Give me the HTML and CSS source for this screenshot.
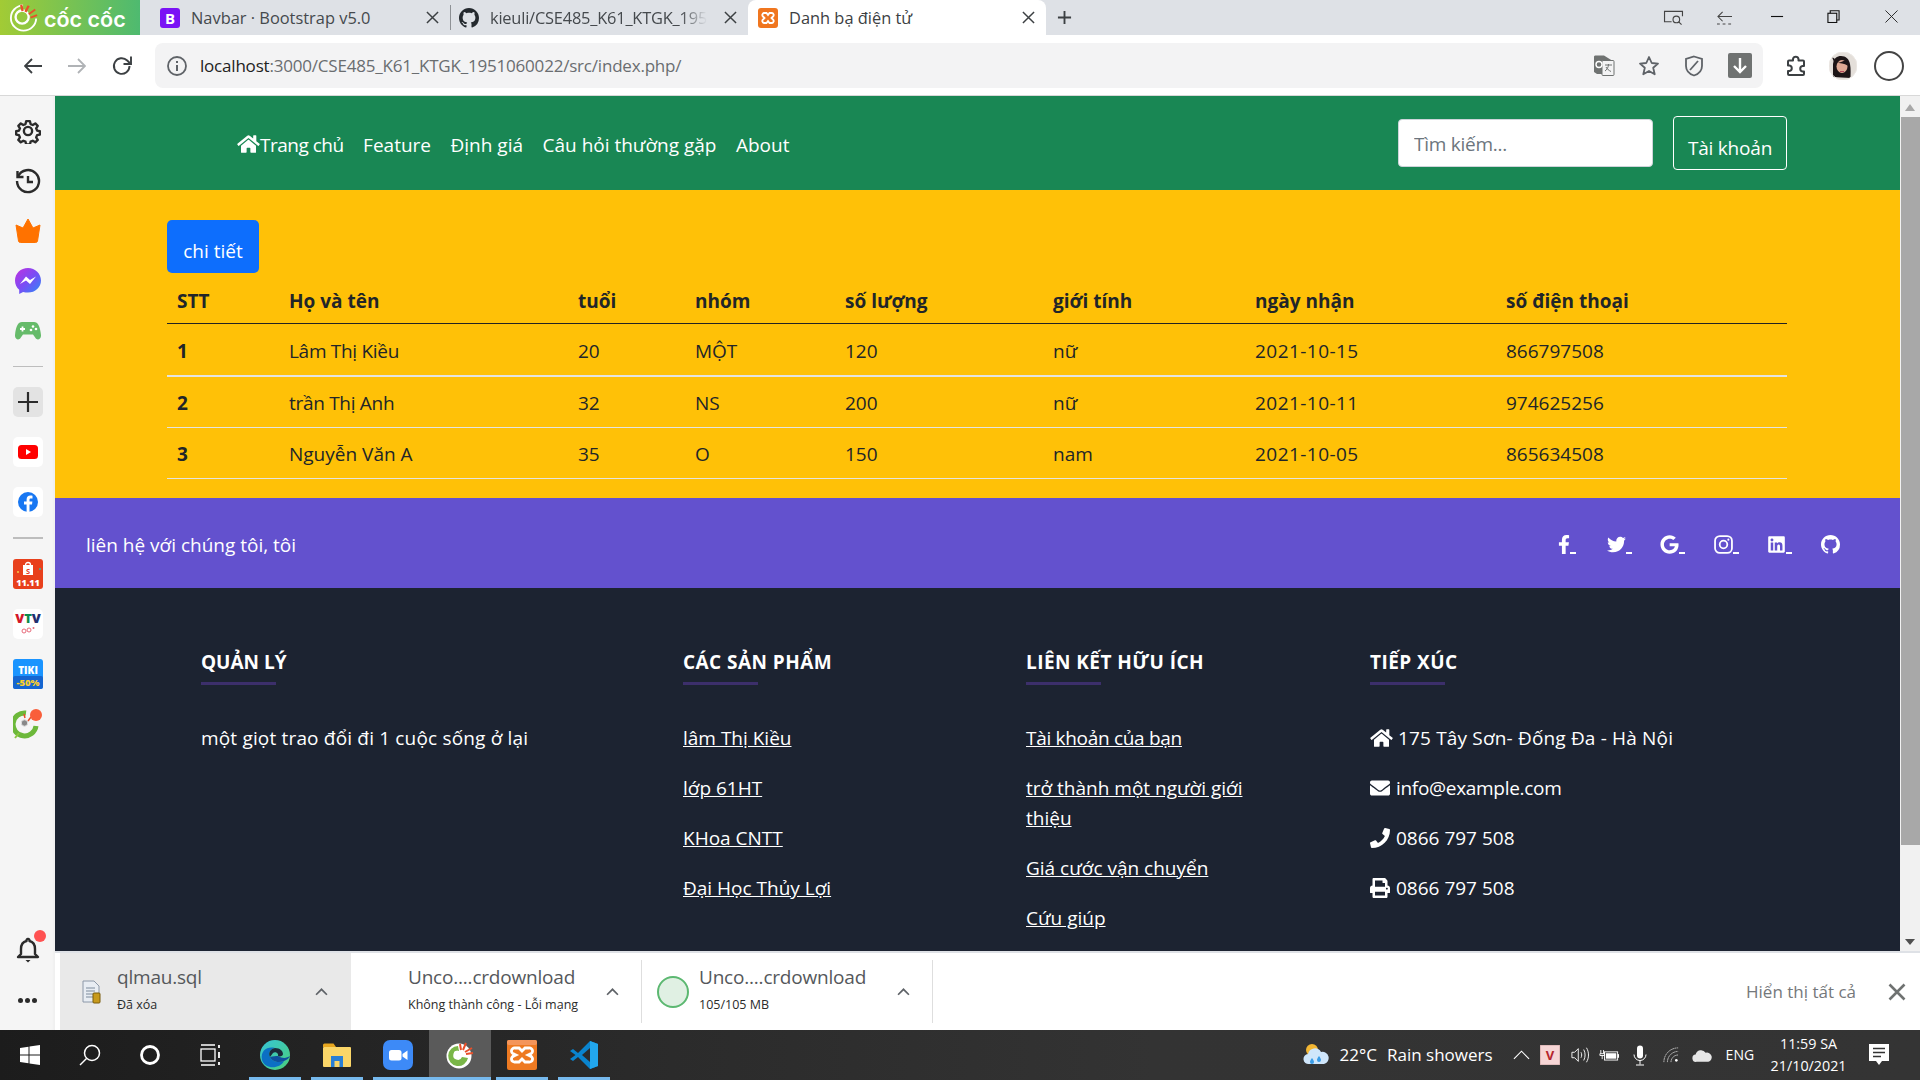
FILE: index.html
```html
<!DOCTYPE html>
<html lang="vi">
<head>
<meta charset="utf-8">
<title>Danh bạ điện tử</title>
<link rel="stylesheet" href="styles.css">
</head>
<body>
<div class="tabstrip">
  <div class="brand">
    <svg class="brand-ic" viewBox="0 0 32 32"><path d="M15 2.500a13.500 13.500 0 1 0 14 14" fill="none" stroke="#fff" stroke-width="2"/><circle cx="14" cy="15" r="7" fill="none" stroke="#fff" stroke-width="2.500"/><path d="M13 2l1.500 6.500M21 3l-3.500 6.500" stroke="#e8502a" stroke-width="2.500"/><path d="M28 7l-7 5M30 13l-7 2.500" stroke="#e8502a" stroke-width="2"/></svg>
    <span class="brand-name">cốc cốc</span>
  </div>
  <div class="tab tab-a">
    <svg class="fav" viewBox="0 0 20 20"><rect width="20" height="20" rx="3" fill="#7a12f5"/><text x="10" y="15.500" text-anchor="middle" font-size="15" font-weight="700" fill="#fff" font-family="Open Sans">B</text></svg>
    <span class="tab-t">Navbar · Bootstrap v5.0</span>
    <svg class="tab-x" viewBox="0 0 14 14"><path d="M1 1l12 12M13 1L1 13" stroke="#3c4043" stroke-width="1.600"/></svg>
  </div>
  <div class="tab tab-b">
    <svg class="fav" viewBox="0 0 16 16"><path fill="#24292e" d="M8 0C3.580 0 0 3.580 0 8c0 3.540 2.290 6.530 5.470 7.590.4.070.55-.17.55-.38 0-.19-.01-.82-.01-1.490-2.010.37-2.530-.49-2.690-.94-.09-.23-.48-.94-.82-1.130-.28-.15-.68-.52-.01-.53.63-.01 1.080.58 1.230.82.72 1.210 1.870.87 2.330.66.07-.52.28-.87.51-1.070-1.780-.2-3.640-.89-3.640-3.950 0-.87.31-1.590.82-2.150-.08-.2-.36-1.020.08-2.120 0 0 .67-.21 2.200.82.64-.18 1.320-.27 2-.27.68 0 1.360.09 2 .27 1.530-1.040 2.200-.82 2.200-.82.44 1.100.16 1.920.08 2.120.51.56.82 1.270.82 2.150 0 3.070-1.870 3.750-3.650 3.950.29.25.54.73.54 1.480 0 1.070-.01 1.930-.01 2.200 0 .21.15.46.55.38A8.013 8.013 0 0 0 16 8c0-4.420-3.580-8-8-8z"/></svg>
    <span class="tab-t tab-fade">kieuli/CSE485_K61_KTGK_195</span>
    <svg class="tab-x" viewBox="0 0 14 14"><path d="M1 1l12 12M13 1L1 13" stroke="#3c4043" stroke-width="1.600"/></svg>
  </div>
  <div class="tab tab-c">
    <svg class="fav" viewBox="0 0 20 20"><rect width="20" height="20" rx="3" fill="#f0761f"/><path d="M6 5h2.500L10 7l1.500-2H14a2 2 0 0 1 1 3.500L13.500 10l1.500 1.500A2 2 0 0 1 14 15h-2.500L10 13l-1.500 2H6a2 2 0 0 1-1-3.500L6.500 10 5 8.500A2 2 0 0 1 6 5z" fill="none" stroke="#fff" stroke-width="1.800"/></svg>
    <span class="tab-t tab-dark">Danh bạ điện tử</span>
    <svg class="tab-x" viewBox="0 0 14 14"><path d="M1 1l12 12M13 1L1 13" stroke="#3c4043" stroke-width="1.600"/></svg>
  </div>
  <svg class="newtab" viewBox="0 0 16 16"><path d="M8 1v14M1 8h14" stroke="#3c4043" stroke-width="2"/></svg>
  <div class="winctl">
    <svg class="wc wc-a" viewBox="0 0 22 18"><path d="M9 12.500H1.500V1.500h19v3M20.500 1.500v5" fill="none" stroke="#444" stroke-width="1.200"/><circle cx="14" cy="10" r="3.500" fill="none" stroke="#444" stroke-width="1.200"/><path d="M16.500 12.500l3 3" stroke="#444" stroke-width="1.200"/></svg>
    <svg class="wc wc-b" viewBox="0 0 18 16"><path d="M7 2L2 7l5 5M2 7h15" fill="none" stroke="#444" stroke-width="1.100"/><path d="M1 15h3M7 15h3M13 15h3" stroke="#444" stroke-width="1.100"/></svg>
    <svg class="wc wc-c" viewBox="0 0 14 14"><path d="M0 7h13" stroke="#111" stroke-width="1.200"/></svg>
    <svg class="wc wc-d" viewBox="0 0 14 14"><rect x="1" y="3.500" width="9.500" height="10" fill="none" stroke="#111" stroke-width="1.200"/><path d="M3.500 3.500V.8H13v10h-2.500" fill="none" stroke="#111" stroke-width="1.200"/></svg>
    <svg class="wc wc-e" viewBox="0 0 14 14"><path d="M.5.5l13 13M13.500.5l-13 13" stroke="#222" stroke-width="1"/></svg>
  </div>
</div>

<div class="toolbar">
  <svg class="tb-ic tb-back" viewBox="0 0 18 16"><path d="M8 1L1 8l7 7M1 8h17" fill="none" stroke="#3c4043" stroke-width="1.800"/></svg>
  <svg class="tb-ic tb-fwd" viewBox="0 0 18 16"><path d="M10 1l7 7-7 7M17 8H0" fill="none" stroke="#b0b3b6" stroke-width="1.800"/></svg>
  <svg class="tb-ic tb-rel" viewBox="0 0 22 22"><path d="M18.500 11a7.800 7.800 0 1 1-2.300-5.500L19 8.200" fill="none" stroke="#3c4043" stroke-width="1.900"/><path d="M20 1.500v7.500h-7.500" fill="none" stroke="#3c4043" stroke-width="1.900"/></svg>
  <div class="urlbar">
    <svg class="u-info" viewBox="0 0 20 20"><circle cx="10" cy="10" r="9" fill="none" stroke="#5f6368" stroke-width="1.800"/><path d="M10 9v6M10 5v2" stroke="#5f6368" stroke-width="2"/></svg>
    <span class="u-text"><span class="u-host">localhost</span>:3000/CSE485_K61_KTGK_1951060022/src/index.php/</span>
    <div class="u-right">
      <svg class="u-ic" viewBox="0 0 22 22"><path d="M1 1.500a1.500 1.500 0 0 1 1.500-1H11l8 5v12a1.500 1.500 0 0 1-1 1.500H4L1 17z" fill="#6f7271"/><rect x="9" y="5.500" width="12" height="15" rx="1" fill="#f3f3f4" stroke="#6f7271"/><circle cx="6" cy="9.500" r="3" fill="none" stroke="#fff" stroke-width="1.400"/><path d="M12 10h7M15.500 9c0 4-2 6-3.500 7M13 12c1 2 3 3.500 5 4.500" fill="none" stroke="#6f7271" stroke-width="1"/></svg>
      <svg class="u-ic" viewBox="0 0 22 22"><path d="M11 2l2.700 6 6.300.6-4.800 4.200 1.500 6.500L11 16l-5.700 3.300 1.500-6.500L2 8.600 8.300 8z" fill="none" stroke="#5f6368" stroke-width="1.800" stroke-linejoin="round"/></svg>
      <svg class="u-ic" viewBox="0 0 22 22"><path d="M11 1.500l8 2.500v7c0 4.500-3.500 8-8 9.500-4.500-1.500-8-5-8-9.500V4z" fill="none" stroke="#5f6368" stroke-width="1.800"/><path d="M15 6L7 15" stroke="#5f6368" stroke-width="1.800"/></svg>
      <svg class="u-dl" viewBox="0 0 24 25"><rect width="24" height="25" rx="2" fill="#6f7271"/><path d="M12 5v14M6 13l6 6 6-6" fill="none" stroke="#fff" stroke-width="2.400"/></svg>
    </div>
  </div>
  <div class="tb-right">
    <svg class="ext" viewBox="0 0 22 22"><path d="M8 4a2.800 2.800 0 0 1 5.500 0v1.500h4.500a1 1 0 0 1 1 1V11h-1.500a2.800 2.800 0 0 0 0 5.500H19V19a1 1 0 0 1-1 1H4a1 1 0 0 1-1-1v-3h1.500a2.800 2.800 0 0 0 0-5.500H3V6.500a1 1 0 0 1 1-1h4z" fill="none" stroke="#3c4043" stroke-width="2" stroke-linejoin="round"/></svg>
    <svg class="avatar" viewBox="0 0 28 28"><circle cx="14" cy="14" r="14" fill="#e4dfda"/><path d="M4 25V12C5 6 8 4 12 4c5 0 8 3 9 8 1 5 .5 10 .5 14z" fill="#1c1416"/><path d="M3 5l3 2-1 3z" fill="#1c1416"/><ellipse cx="13" cy="14.500" rx="5.500" ry="6.500" fill="#dfa994"/><path d="M7 11c3 0 7-2 10-3 2 2 2 4 1.500 5.500C15.500 11.500 11 11 7 11z" fill="#1c1416"/><path d="M11 19.500h4" stroke="#b3485a"/><circle cx="14" cy="14" r="14" fill="none" stroke="#ece8e4"/></svg>
    <span class="profile"></span>
  </div>
</div>

<div class="shell">
  <aside class="side">
    <svg class="s-ic" viewBox="0 0 24 24"><circle cx="12" cy="12" r="3.800" fill="none" stroke="#2b2b2b" stroke-width="2.200"/><path d="M10 1.500h4l.7 3.100 2.300 1 2.700-1.700 2.600 2.600-1.700 2.700 1 2.300 3 .7v3.500l-3 .7-1 2.300 1.700 2.700-2.600 2.600-2.700-1.700-2.300 1-.7 3h-4l-.7-3-2.300-1-2.700 1.700-2.600-2.600 1.700-2.700-1-2.300-3-.7v-3.500l3-.7 1-2.300-1.700-2.700 2.600-2.600 2.700 1.700 2.300-1z" transform="translate(1.600 1.600) scale(.87)" fill="none" stroke="#2b2b2b" stroke-width="2.500" stroke-linejoin="round"/></svg>
    <svg class="s-ic" viewBox="0 0 26 26"><path d="M3 8.500A11 11 0 1 1 2 13" fill="none" stroke="#2b2b2b" stroke-width="2.400"/><path d="M2.500 3v6h6" fill="none" stroke="#2b2b2b" stroke-width="2.400"/><path d="M13 8v6h5" fill="none" stroke="#2b2b2b" stroke-width="2.400"/></svg>
    <svg class="s-ic" viewBox="0 0 26 26"><path d="M13 1l5 9 7-3-2.500 16a2 2 0 0 1-2 1.500h-15a2 2 0 0 1-2-1.500L1 7l7 3z" fill="#ff7200" stroke="#ff7200" stroke-linejoin="round"/></svg>
    <svg class="s-ic" viewBox="0 0 26 26"><defs><linearGradient id="mg" x1="0" y1="0" x2="1" y2="1"><stop offset="0" stop-color="#c030e0"/><stop offset=".5" stop-color="#7a4df5"/><stop offset="1" stop-color="#2a8cf7"/></linearGradient></defs><path d="M13 0C5.700 0 0 5.300 0 12.500c0 3.800 1.600 7 4.200 9.300V26l3.900-2.100c1.500.4 3.200.7 4.900.7 7.300 0 13-5.300 13-12.100S20.300 0 13 0z" fill="url(#mg)"/><path d="M5 16l6-7.500 4 3.500 6-3.500-6 7.500-4-3.500z" fill="#fff"/></svg>
    <svg class="s-ic" viewBox="0 0 26 20"><path d="M7 1h12c4 0 6 4 7 13 .3 4-3.500 6-5.500 3L18 13.500H8L5.500 17C3.500 20-.3 18 0 14 1 5 3 1 7 1z" fill="#66bb6a"/><path d="M5 8h5M7.500 5.500v5" stroke="#fff" stroke-width="1.800"/><circle cx="18" cy="5.500" r="1.300" fill="#fff"/><circle cx="21" cy="8" r="1.300" fill="#fff"/><circle cx="16" cy="9" r="1.300" fill="#fff"/></svg>
    <div class="s-div"></div>
    <div class="s-tile s-plus"><svg viewBox="0 0 20 20"><path d="M10 0v20M0 10h20" stroke="#2b2b2b" stroke-width="2.200"/></svg></div>
    <div class="s-tile"><svg viewBox="0 0 20 14"><rect width="20" height="14" rx="3.500" fill="#f00"/><path d="M8 4l5 3-5 3z" fill="#fff"/></svg></div>
    <div class="s-tile"><svg viewBox="0 0 20 20"><circle cx="10" cy="10" r="10" fill="#1877f2"/><path d="M11.500 20v-7.500H14l.4-3h-2.900V7.800c0-.9.300-1.400 1.500-1.400h1.500V3.700c-.4 0-1.200-.1-2.200-.1-2.200 0-3.700 1.300-3.700 3.800v2.100H6v3h2.600V20z" fill="#fff"/></svg></div>
    <div class="s-div s-div2"></div>
    <div class="s-tile s-shop"><svg viewBox="0 0 30 30"><rect width="30" height="30" rx="3" fill="#e8401c"/><circle cx="5" cy="13" r="1" fill="#f7c948"/><circle cx="27" cy="10" r="1" fill="#32b8a0"/><path d="M10 6h10v10H10z" fill="#fff"/><path d="M12.500 6a2.500 2.500 0 0 1 5 0" fill="none" stroke="#fff" stroke-width="1.300"/><text x="15" y="14.500" text-anchor="middle" font-size="7.500" font-weight="700" fill="#e8401c" font-family="Open Sans">S</text><text x="15" y="26.500" text-anchor="middle" font-size="9" font-weight="800" fill="#fff" font-family="Open Sans">11.11</text></svg></div>
    <div class="s-tile s-vtv"><svg viewBox="0 0 30 30"><text x="15" y="14" text-anchor="middle" font-size="13" font-weight="800" font-family="Open Sans"><tspan fill="#d3172a">V</tspan><tspan fill="#0d8a4e">T</tspan><tspan fill="#23306f">V</tspan></text><circle cx="11" cy="22" r="2" fill="none" stroke="#e76a7a"/><circle cx="16" cy="21" r="2" fill="none" stroke="#e76a7a"/><circle cx="20.500" cy="19" r="1" fill="#e76a7a"/></svg></div>
    <div class="s-tile s-tiki"><svg viewBox="0 0 30 30"><rect width="30" height="30" rx="3" fill="#1a94ff"/><rect y="17" width="30" height="13" rx="2" fill="#1565d0"/><text x="15" y="14.500" text-anchor="middle" font-size="10" font-weight="800" fill="#fff" font-family="Open Sans">TIKI</text><text x="15" y="27" text-anchor="middle" font-size="9.500" font-weight="800" fill="#fad02c" font-family="Open Sans">-50%</text></svg></div>
    <svg class="s-ic s-coc" viewBox="0 0 30 30"><path d="M13 4a11.500 11.500 0 1 0 10 13" fill="none" stroke="#6cb83a" stroke-width="5"/><circle cx="11.500" cy="14" r="3.200" fill="#888" stroke="#ddd"/><path d="M2 29l4-5" stroke="#8cc63f" stroke-width="2"/><path d="M11 5l1 4M18 8l-3 4" stroke="#e8502a" stroke-width="1.500"/><circle cx="23" cy="6" r="6" fill="#f95e3a"/></svg>
    <div class="s-bottom">
      <div class="bell-wrap">
        <svg class="s-ic" viewBox="0 0 24 26"><path d="M12 2a1.500 1.500 0 0 1 1.500 2C17.500 5 19 8 19 12v5l3 3H2l3-3v-5c0-4 1.500-7 5.500-8A1.500 1.500 0 0 1 12 2z" fill="none" stroke="#2b2b2b" stroke-width="2.400" stroke-linejoin="round"/><path d="M9.500 23h5l-2.500 2.500z" fill="#2b2b2b"/></svg>
        <span class="bell-dot"></span>
      </div>
      <div class="s-dots"><span></span><span></span><span></span></div>
    </div>
  </aside>

  <div class="stage">
    <div class="viewport">
      <main class="page">
        <header class="nav">
          <ul class="nav-links">
            <li class="nav-home"><svg class="home" viewBox="0 0 576 512"><path fill="#fff" d="M280.370 148.260L96 300.110V464a16 16 0 0 0 16 16l112.060-.29a16 16 0 0 0 15.920-16V368a16 16 0 0 1 16-16h64a16 16 0 0 1 16 16v95.640a16 16 0 0 0 16 16.050L464 480a16 16 0 0 0 16-16V300L295.670 148.260a12.190 12.190 0 0 0-15.300 0zM571.600 251.470L488 182.560V44.050a12 12 0 0 0-12-12h-56a12 12 0 0 0-12 12v72.610L318.470 43a48 48 0 0 0-61 0L4.340 251.470a12 12 0 0 0-1.600 16.900l25.500 31A12 12 0 0 0 45.150 301l235.220-193.740a12.190 12.190 0 0 1 15.300 0L530.900 301a12 12 0 0 0 16.900-1.600l25.500-31a12 12 0 0 0-1.700-16.930z"/></svg>Trang chủ</li>
            <li>Feature</li>
            <li>Định giá</li>
            <li>Câu hỏi thường gặp</li>
            <li>About</li>
          </ul>
          <div class="search">
            <input class="search-in" type="text" placeholder="Tìm kiếm...">
            <button class="acct" type="button">Tài khoản</button>
          </div>
        </header>

        <section class="band">
          <button class="detail" type="button">chi tiết</button>
          <table class="grid">
            <colgroup><col class="c1"><col class="c2"><col class="c3"><col class="c4"><col class="c5"><col class="c6"><col class="c7"><col class="c8"></colgroup>
            <thead>
              <tr><th>STT</th><th>Họ và tên</th><th>tuổi</th><th>nhóm</th><th>số lượng</th><th>giới tính</th><th>ngày nhận</th><th>số điện thoại</th></tr>
            </thead>
            <tbody>
              <tr class="r-thick"><th>1</th><td class="tight">Lâm Thị Kiều</td><td>20</td><td>MỘT</td><td>120</td><td>nữ</td><td class="date">2021-10-15</td><td>866797508</td></tr>
              <tr><th>2</th><td class="tight">trần Thị Anh</td><td>32</td><td>NS</td><td>200</td><td>nữ</td><td class="date">2021-10-11</td><td>974625256</td></tr>
              <tr><th>3</th><td>Nguyễn Văn A</td><td>35</td><td>O</td><td>150</td><td>nam</td><td class="date">2021-10-05</td><td>865634508</td></tr>
            </tbody>
          </table>
        </section>

        <section class="social">
          <span class="soc-text">liên hệ với chúng tôi, tôi</span>
          <div class="soc-icons">
            <a class="soc soc-first dash"><svg class="f" viewBox="0 0 320 512"><path fill="#fff" d="M279.140 288l14.220-92.660h-88.910v-60.130c0-25.350 12.420-50.060 52.240-50.060h40.420V6.260S260.430 0 225.360 0c-73.220 0-121.080 44.380-121.080 124.720v70.620H22.890V288h81.390v224h100.170V288z"/></svg></a>
            <a class="soc dash"><svg viewBox="0 0 512 512"><path fill="#fff" d="M459.370 151.716c.325 4.548.325 9.097.325 13.645 0 138.720-105.583 298.558-298.558 298.558-59.452 0-114.680-17.219-161.137-47.106 8.447.974 16.568 1.299 25.340 1.299 49.055 0 94.213-16.568 130.274-44.832-46.132-.975-84.792-31.188-98.112-72.772 6.498.974 12.995 1.624 19.818 1.624 9.421 0 18.843-1.300 27.614-3.573-48.081-9.747-84.143-51.980-84.143-102.985v-1.299c13.969 7.797 30.214 12.670 47.431 13.319-28.264-18.843-46.781-51.005-46.781-87.391 0-19.492 5.197-37.360 14.294-52.954 51.655 63.675 129.300 105.258 216.365 109.807-1.624-7.797-2.599-15.918-2.599-24.040 0-57.828 46.782-104.934 104.934-104.934 30.213 0 57.502 12.670 76.670 33.137 23.715-4.548 46.456-13.320 66.599-25.340-7.798 24.366-24.366 44.833-46.132 57.827 21.117-2.273 41.584-8.122 60.426-16.243-14.292 20.791-32.161 39.308-52.628 54.253z"/></svg></a>
            <a class="soc dash"><svg viewBox="0 0 488 512"><path fill="#fff" d="M488 261.800C488 403.300 391.100 504 248 504 110.800 504 0 393.200 0 256S110.800 8 248 8c66.800 0 123 24.500 166.300 64.900l-67.500 64.900C258.500 52.600 94.300 116.600 94.300 256c0 86.500 69.100 156.600 153.700 156.600 98.200 0 135-70.400 140.800-106.900H248v-85.300h236.100c2.300 12.700 3.900 24.900 3.900 41.400z"/></svg></a>
            <a class="soc dash"><svg viewBox="0 0 18 18"><rect x="1" y="1" width="16" height="16" rx="4.500" fill="none" stroke="#fff" stroke-width="1.700"/><circle cx="9" cy="9" r="3.600" fill="none" stroke="#fff" stroke-width="1.700"/><circle cx="13.600" cy="4.400" r="1" fill="#fff"/></svg></a>
            <a class="soc dash"><svg viewBox="0 0 448 512"><path fill="#fff" d="M416 32H31.900C14.300 32 0 46.500 0 64.300v383.400C0 465.500 14.300 480 31.900 480H416c17.600 0 32-14.500 32-32.300V64.300c0-17.800-14.400-32.300-32-32.300zM135.400 416H69V202.200h66.500V416zm-33.200-243c-21.300 0-38.500-17.300-38.500-38.500S80.900 96 102.200 96c21.200 0 38.500 17.300 38.500 38.500 0 21.300-17.200 38.500-38.500 38.500zm282.100 243h-66.400V312c0-24.800-.5-56.700-34.500-56.700-34.600 0-39.900 27-39.900 54.900V416h-66.400V202.200h63.700v29.200h.9c8.900-16.800 30.600-34.500 62.900-34.500 67.200 0 79.700 44.300 79.700 101.900V416z"/></svg></a>
            <a class="soc"><svg viewBox="0 0 16 16"><path fill="#fff" d="M8 0C3.580 0 0 3.580 0 8c0 3.540 2.290 6.530 5.470 7.590.4.070.55-.17.55-.38 0-.19-.01-.82-.01-1.490-2.010.37-2.530-.49-2.690-.94-.09-.23-.48-.94-.82-1.130-.28-.15-.68-.52-.01-.53.63-.01 1.080.58 1.230.82.72 1.210 1.870.87 2.330.66.07-.52.28-.87.51-1.070-1.780-.2-3.640-.89-3.640-3.950 0-.87.31-1.590.82-2.150-.08-.2-.36-1.020.08-2.120 0 0 .67-.21 2.200.82.64-.18 1.320-.27 2-.27.68 0 1.360.09 2 .27 1.530-1.040 2.200-.82 2.200-.82.44 1.100.16 1.920.08 2.120.51.56.82 1.270.82 2.150 0 3.070-1.870 3.750-3.650 3.950.29.25.54.73.54 1.480 0 1.070-.01 1.930-.01 2.200 0 .21.15.46.55.38A8.013 8.013 0 0 0 16 8c0-4.420-3.580-8-8-8z"/></svg></a>
          </div>
        </section>

        <footer class="foot">
          <div class="f-col">
            <h6 class="f-h">QUẢN LÝ</h6>
            <hr class="f-rule">
            <p class="f-line f-wide">một giọt trao đổi đi 1 cuộc sống ở lại</p>
          </div>
          <div class="f-col">
            <h6 class="f-h f-hs">CÁC SẢN PHẨM</h6>
            <hr class="f-rule">
            <p class="f-line"><a>lâm Thị Kiều</a></p>
            <p class="f-line"><a>lớp 61HT</a></p>
            <p class="f-line"><a>KHoa CNTT</a></p>
            <p class="f-line"><a>Đại Học Thủy Lợi</a></p>
          </div>
          <div class="f-col">
            <h6 class="f-h f-hs">LIÊN KẾT HỮU ÍCH</h6>
            <hr class="f-rule">
            <p class="f-line tight"><a>Tài khoản của bạn</a></p>
            <p class="f-line f-narrow"><a>trở thành một người giới thiệu</a></p>
            <p class="f-line"><a>Giá cước vận chuyển</a></p>
            <p class="f-line"><a>Cứu giúp</a></p>
          </div>
          <div class="f-col">
            <h6 class="f-h f-hs">TIẾP XÚC</h6>
            <hr class="f-rule">
            <p class="f-line f-wide"><svg class="f-ic f-home" viewBox="0 0 576 512"><path fill="#fff" d="M280.370 148.260L96 300.110V464a16 16 0 0 0 16 16l112.060-.29a16 16 0 0 0 15.920-16V368a16 16 0 0 1 16-16h64a16 16 0 0 1 16 16v95.640a16 16 0 0 0 16 16.050L464 480a16 16 0 0 0 16-16V300L295.670 148.260a12.190 12.190 0 0 0-15.300 0zM571.600 251.470L488 182.560V44.050a12 12 0 0 0-12-12h-56a12 12 0 0 0-12 12v72.610L318.470 43a48 48 0 0 0-61 0L4.340 251.470a12 12 0 0 0-1.600 16.900l25.500 31A12 12 0 0 0 45.150 301l235.220-193.740a12.190 12.190 0 0 1 15.300 0L530.900 301a12 12 0 0 0 16.900-1.600l25.500-31a12 12 0 0 0-1.700-16.930z"/></svg>175 Tây Sơn- Đống Đa - Hà Nội</p>
            <p class="f-line tight"><svg class="f-ic" viewBox="0 0 512 512"><path fill="#fff" d="M502.300 190.800c3.900-3.100 9.700-.2 9.700 4.700V400c0 26.500-21.500 48-48 48H48c-26.500 0-48-21.500-48-48V195.600c0-5 5.700-7.800 9.700-4.700 22.400 17.400 52.100 39.500 154.100 113.600 21.100 15.400 56.700 47.800 92.200 47.600 35.700.3 72-32.800 92.300-47.600 102-74.100 131.600-96.300 154-113.700zM256 320c23.200.4 56.600-29.200 73.400-41.400 132.700-96.300 142.800-104.700 173.400-128.700 5.800-4.500 9.200-11.500 9.200-18.900v-19c0-26.500-21.500-48-48-48H48C21.500 64 0 85.500 0 112v19c0 7.400 3.400 14.300 9.200 18.900 30.600 23.900 40.700 32.400 173.400 128.700 16.800 12.200 50.200 41.800 73.400 41.400z"/></svg>info@example.com</p>
            <p class="f-line"><svg class="f-ic" viewBox="0 0 512 512"><path fill="#fff" d="M493.400 24.600l-104-24c-11.300-2.600-22.900 3.300-27.500 13.900l-48 112c-4.200 9.800-1.400 21.300 6.900 28l60.600 49.600c-36 76.700-98.900 140.500-177.200 177.200l-49.600-60.600c-6.800-8.300-18.200-11.100-28-6.900l-112 48C3.900 366.500-2 378.100.6 389.400l24 104C27.100 504.200 36.700 512 48 512c256.100 0 464-207.500 464-464 0-11.200-7.700-20.900-18.600-23.400z"/></svg>0866 797 508</p>
            <p class="f-line"><svg class="f-ic" viewBox="0 0 512 512"><path fill="#fff" d="M448 192V77.250c0-8.490-3.370-16.620-9.370-22.630L393.370 9.370c-6-6-14.140-9.370-22.630-9.370H96C78.330 0 64 14.330 64 32v160c-35.350 0-64 28.650-64 64v112c0 8.840 7.160 16 16 16h48v96c0 17.670 14.330 32 32 32h320c17.670 0 32-14.330 32-32v-96h48c8.840 0 16-7.160 16-16V256c0-35.350-28.650-64-64-64zm-64 256H128v-96h256v96zm0-224H128V64h192v48c0 8.840 7.160 16 16 16h48v96zm48 72c-13.250 0-24-10.750-24-24 0-13.260 10.750-24 24-24s24 10.740 24 24c0 13.250-10.750 24-24 24z"/></svg>0866 797 508</p>
          </div>
        </footer>
      </main>
      <div class="vscroll">
        <span class="sb-up"></span>
        <span class="sb-thumb"></span>
        <span class="sb-down"></span>
      </div>
    </div>
    <div class="downloads">
      <div class="dl dl-on">
        <div class="dl-icon"><svg viewBox="0 0 20 24"><path d="M1 1h11l5 5v16H1z" fill="#e8edf3" stroke="#8c98a8"/><path d="M4 8h9M4 11h9M4 14h8M4 17h7" stroke="#7d8b9c"/><rect x="11" y="13" width="7" height="10" rx="1" fill="#c79a1c" stroke="#7a5d0c"/></svg></div>
        <div class="dl-body"><div class="dl-name">qlmau.sql</div><div class="dl-sub">Đã xóa</div></div>
        <svg class="dl-chev" viewBox="0 0 12 8"><path d="M1 7l5-5 5 5" fill="none" stroke="#5f6368" stroke-width="1.600"/></svg>
      </div>
      <div class="dl">
        <div class="dl-icon"></div>
        <div class="dl-body"><div class="dl-name">Unco....crdownload</div><div class="dl-sub">Không thành công - Lỗi mạng</div></div>
        <svg class="dl-chev" viewBox="0 0 12 8"><path d="M1 7l5-5 5 5" fill="none" stroke="#5f6368" stroke-width="1.600"/></svg>
      </div>
      <div class="dl">
        <div class="dl-icon"><span class="dl-ring"></span></div>
        <div class="dl-body"><div class="dl-name">Unco....crdownload</div><div class="dl-sub">105/105 MB</div></div>
        <svg class="dl-chev" viewBox="0 0 12 8"><path d="M1 7l5-5 5 5" fill="none" stroke="#5f6368" stroke-width="1.600"/></svg>
      </div>
      <div class="dl-end">
        <span class="dl-all">Hiển thị tất cả</span>
        <svg class="dl-x" viewBox="0 0 18 18"><path d="M1.500 1.500l15 15M16.500 1.500l-15 15" stroke="#6f7271" stroke-width="2.600"/></svg>
      </div>
    </div>
  </div>
</div>

<div class="taskbar">
  <div class="tk tk-sys"><svg class="t-win" viewBox="0 0 20 20"><path fill="#fff" d="M0 3l8.500-1.300V9.500H0zM9.500 1.500L20 0v9.500H9.500zM0 10.500h8.500v7.800L0 17zM9.500 10.500H20V20L9.500 18.500z"/></svg></div>
  <div class="tk tk-sys"><svg class="t-24" viewBox="0 0 22 22"><circle cx="13" cy="9" r="7.500" fill="none" stroke="#fff" stroke-width="1.500"/><path d="M7.500 14.500L1 21" stroke="#fff" stroke-width="1.500"/></svg></div>
  <div class="tk tk-sys"><svg class="t-24" viewBox="0 0 22 22"><circle cx="11" cy="11" r="8.500" fill="none" stroke="#fff" stroke-width="2.800"/></svg></div>
  <div class="tk tk-sys"><svg class="t-24" viewBox="0 0 22 22"><path d="M2 1h14M2 21h14" stroke="#fff" stroke-width="1.300"/><rect x="2" y="5" width="14" height="12" fill="none" stroke="#fff" stroke-width="1.300"/><path d="M20 1v3M20 8v6M20 18v3" stroke="#fff" stroke-width="1.800"/></svg></div>
  <div class="tk tk-app lit"><svg class="t-30" viewBox="0 0 30 30"><defs><linearGradient id="eg" x1="0" y1="0" x2="1" y2="1"><stop offset="0" stop-color="#36c3d8"/><stop offset="1" stop-color="#4bd07a"/></linearGradient></defs><circle cx="15" cy="15" r="15" fill="url(#eg)"/><path d="M2 20C0 10 8 6 15 8c-5 1-7 5-5 9 2 5 9 6 14 4-4 8-19 9-22-1z" fill="#0c6fc4"/><path d="M10 17c-2-4 0-8 5-9 5 0 8 3 8 6 0 2-3 3-5 2 1-3-3-5-5-3-1 1-2 3-3 4z" fill="#1c2a3a"/><path d="M10 17c2 5 9 6 14 4 3-1 5-3 6-5-3 2-7 3-12 0-2 0-5 0-8 1z" fill="#0f4f9e"/></svg></div>
  <div class="tk tk-app lit"><svg class="t-30" viewBox="0 0 30 26"><path d="M1 3a1.500 1.500 0 0 1 1.500-1.500h9L14 5H1z" fill="#e8a71f"/><rect x="1" y="5" width="28" height="20" rx="1" fill="#fbd668"/><path d="M9 14h12v11h-3.500v-6h-5v6H9z" fill="#2a7fd5"/></svg></div>
  <div class="tk tk-app lit lit-split"><svg class="t-30" viewBox="0 0 30 30"><rect width="30" height="30" rx="7" fill="#3d8af7"/><rect x="6" y="10" width="12.500" height="10.500" rx="2.500" fill="#fff"/><path d="M19.500 14l5-3.500v9.500l-5-3.500z" fill="#fff"/></svg></div>
  <div class="tk tk-app lit lit-on"><svg class="t-30" viewBox="0 0 30 30"><circle cx="14" cy="16" r="12.500" fill="#fff"/><path d="M13 6a10 10 0 1 0 10 12l-6-1a4.500 4.500 0 1 1-3-6z" fill="#7ab648"/><circle cx="12" cy="14" r="2.500" fill="none" stroke="#fff" stroke-width="1.500"/><path d="M15 4l1 6M21 3l-3 7" stroke="#e8502a" stroke-width="2"/><path d="M27 8l-7 4M28 13l-7 1" stroke="#e8502a" stroke-width="2"/></svg></div>
  <div class="tk tk-app lit"><svg class="t-30" viewBox="0 0 30 30"><rect width="30" height="30" rx="2" fill="#ee7a22"/><rect y="0" width="30" height="5" rx="2" fill="#f4955a"/><path d="M8 8h4l3 3 3-3h4a3 3 0 0 1 1 6l-2 1 2 1a3 3 0 0 1-1 6h-4l-3-3-3 3H8a3 3 0 0 1-1-6l2-1-2-1a3 3 0 0 1 1-6z" fill="none" stroke="#fff" stroke-width="2.800"/></svg></div>
  <div class="tk tk-app lit"><svg class="t-30" viewBox="0 0 30 30"><path d="M21 1L9 13 4 9l-3 2 5.500 4L1 19l3 2 5-4 12 12 8-3V4z" fill="#0a84ce"/><path d="M21 8v14L13 15z" fill="#2b2b2b"/><path d="M21 1l8 3v22l-8 3z" fill="#22a7ee"/></svg></div>

  <div class="tray">
    <svg class="tr-weather" viewBox="0 0 26 24"><circle cx="9" cy="7" r="6" fill="#f3b733"/><path d="M6 21a5 5 0 0 1-1-10 7 7 0 0 1 13-2 6 6 0 0 1 3 12z" fill="#cfe6fb"/><path d="M9 15c-1.500 2-2 3-2 4a2 2 0 0 0 4 0c0-1-.5-2-2-4zM16 13c-1.500 2-2 3-2 4a2 2 0 0 0 4 0c0-1-.5-2-2-4z" fill="#3a9de8"/></svg>
    <span class="tr-temp">22°C</span>
    <span class="tr-cond">Rain showers</span>
    <svg class="tr-chev" viewBox="0 0 18 10"><path d="M1 9l8-8 8 8" fill="none" stroke="#fff" stroke-width="1.200"/></svg>
    <svg class="tr-v" viewBox="0 0 20 20"><rect width="20" height="20" fill="#f6d5d5" stroke="#c9a0a0"/><text x="10" y="15" text-anchor="middle" font-size="13" font-weight="700" fill="#b5242c" font-family="Open Sans">V</text></svg>
    <svg class="tr-sp" viewBox="0 0 22 20"><path d="M1 7h3l4-4v14l-4-4H1z" fill="none" stroke="#fff"/><path d="M11 7c1 2 1 4 0 6M14 4c2 4 2 8 0 12M17 2c3 5 3 11 0 16" fill="none" stroke="#fff"/></svg>
    <svg class="tr-bat" viewBox="0 0 22 14"><path d="M2 1v4M5 1v4M1 5h5v2H1zM3.500 7v4" stroke="#fff" stroke-width="1" fill="none"/><rect x="6" y="3" width="14.500" height="9" fill="none" stroke="#fff"/><rect x="7.500" y="4.500" width="11.500" height="6" fill="#fff"/><rect x="20.500" y="5.500" width="1.500" height="4" fill="#fff"/></svg>
    <svg class="tr-mic" viewBox="0 0 14 20"><rect x="4" y="0" width="6" height="13" rx="3" fill="#fff"/><path d="M1 9a6 6 0 0 0 12 0M7 15v4M3 19.500h8" fill="none" stroke="#fff"/></svg>
    <svg class="tr-wifi" viewBox="0 0 18 18"><path d="M1 17A16 16 0 0 1 17 1M5 17A12 12 0 0 1 17 5M9 17a8 8 0 0 1 8-8" fill="none" stroke="#ccc" stroke-dasharray="2 .6"/><circle cx="15" cy="15" r="1.500" fill="#fff"/></svg>
    <svg class="tr-cloud" viewBox="0 0 22 14"><path d="M5 14a4 4 0 0 1-1-8 6 6 0 0 1 11-2 5 5 0 0 1 3 10z" fill="#e6e6e6"/></svg>
    <span class="tr-eng">ENG</span>
    <div class="tr-clock"><span>11:59 SA</span><span>21/10/2021</span></div>
    <svg class="tr-note" viewBox="0 0 20 22"><path d="M0 0h20v17h-7l-3 4-3-4H0z" fill="#fff"/><path d="M4 4.500h12M4 8.500h12M4 12.500h8" stroke="#333" stroke-width="1.300"/></svg>
  </div>
</div>
</body>
</html>
```

FILE: styles.css
```css
* { box-sizing: border-box; }
html, body { margin: 0; padding: 0; }
body {
  width: 1920px;
  height: 1080px;
  overflow: hidden;
  font-family: "Open Sans", "Noto Sans", sans-serif;
  font-size: 19px;
  line-height: 30px;
  color: #212529;
  background: #fff;
  display: flex;
  flex-direction: column;
}
svg { display: block; flex: none; }

/* tab strip */
.tabstrip { height: 35px; background: #dee1e6; display: flex; align-items: center; flex: none; }
.brand { width: 140px; height: 35px; background: linear-gradient(90deg, #a2cb35, #4eba70); display: flex; align-items: center; padding-left: 9px; gap: 5px; color: #fff; }
.brand-ic { width: 30px; height: 30px; }
.brand-name { font-family: "Inter", sans-serif; font-size: 21.500px; font-weight: 600; line-height: 35px; white-space: nowrap; padding-top: 3px; }
.tab { height: 35px; display: flex; align-items: center; font-size: 16.400px; color: #45494d; position: relative; flex: none; }
.tab-a { width: 310px; padding-left: 20px; }
.tab-b { width: 298px; padding-left: 9px; }
.tab-b::before { content: ""; position: absolute; left: 0; top: 5px; width: 1px; height: 25px; background: #8e9195; }
.tab-c { width: 298px; padding-left: 10px; background: #fff; border-radius: 8px 8px 0 0; }
.fav { width: 20px; height: 20px; margin-right: 11px; }
.tab-t { white-space: nowrap; }
.tab-dark { color: #3c4043; }
.tab-fade { letter-spacing: -.2px; -webkit-mask-image: linear-gradient(90deg, #000 88%, transparent); mask-image: linear-gradient(90deg, #000 88%, transparent); }
.tab-x { width: 13px; height: 13px; position: absolute; right: 11px; top: 11px; }
.newtab { width: 15px; height: 15px; margin-left: 11px; }
.winctl { margin-left: auto; position: relative; width: 260px; height: 35px; }
.wc { position: absolute; }
.wc-a { width: 21px; height: 17px; left: 3px; top: 10px; }
.wc-b { width: 17px; height: 15px; left: 56px; top: 10px; }
.wc-c { width: 13px; height: 13px; left: 111px; top: 10px; }
.wc-d { width: 13px; height: 13px; left: 167px; top: 10px; }
.wc-e { width: 13px; height: 13px; left: 225px; top: 10px; }

/* toolbar */
.toolbar { height: 61px; flex: none; background: #fff; display: flex; align-items: center; border-bottom: 1px solid #d8d8d8; padding-top: 1px; }
.tb-ic { flex: none; }
.tb-back { width: 18px; height: 16px; margin-left: 24px; }
.tb-fwd { width: 18px; height: 16px; margin-left: 26px; }
.tb-rel { width: 22px; height: 22px; margin-left: 25px; }
.urlbar { width: 1608px; height: 45px; margin-left: 22px; background: #f3f3f4; border-radius: 8px; display: flex; align-items: center; padding-left: 12px; }
.u-info { width: 20px; height: 20px; margin-right: 13px; }
.u-text { font-size: 17px; color: #6a6d70; white-space: nowrap; letter-spacing: -.2px; }
.u-host { color: #222; }
.u-right { margin-left: auto; display: flex; align-items: center; gap: 23px; padding-right: 11px; }
.u-ic { width: 22px; height: 22px; }
.u-dl { width: 24px; height: 25px; }
.tb-right { display: flex; align-items: center; margin-left: 22px; }
.ext { width: 22px; height: 22px; }
.avatar { width: 28px; height: 28px; margin-left: 22px; }
.profile { width: 30px; height: 30px; border: 2.500px solid #444; border-radius: 50%; margin-left: 17px; }

/* shell */
.shell { flex: 1; display: flex; min-height: 0; }
.side { width: 55px; flex: none; background: #f5f5f5; box-shadow: inset -3px 0 3px -2px #ececec; display: flex; flex-direction: column; align-items: center; padding: 10px 0 5px; }
.s-ic { width: 26px; height: 26px; margin: 12px 0; }
.s-div { width: 30px; height: 1px; background: #bdbdbd; margin: 10px 0 10px; flex: none; }
.s-div2 { height: 2px; margin: 10px 0; }
.s-tile { width: 30px; height: 30px; background: #fff; border-radius: 5px; margin: 10px 0; display: flex; align-items: center; justify-content: center; flex: none; }
.s-tile svg { width: 20px; height: 20px; }
.s-plus { background: #e3e3e3; }
.s-shop svg, .s-vtv svg, .s-tiki svg { width: 30px; height: 30px; }
.s-coc { width: 30px; height: 30px; margin: 10px 0; }
.s-bottom { margin-top: auto; display: flex; flex-direction: column; align-items: center; }
.bell-wrap { position: relative; }
.bell-dot { position: absolute; width: 12px; height: 12px; border-radius: 50%; background: #ff5252; right: -5px; top: 5px; }
.s-dots { height: 50px; display: flex; align-items: center; gap: 2px; }
.s-dots span { width: 5px; height: 5px; border-radius: 50%; background: #2b2b2b; }

.stage { flex: 1; min-width: 0; display: flex; flex-direction: column; }
.viewport { height: 855px; display: flex; flex: none; overflow: hidden; }
.page { flex: 1; min-width: 0; height: 855px; overflow: hidden; display: flex; flex-direction: column; }

/* nav */
.nav { height: 94px; flex: none; background: #198754; display: flex; align-items: center; padding: 0 113px 0 182px; color: #fff; }
.nav-links { list-style: none; display: flex; gap: 19.500px; margin: 0; padding: 4px 0 0; }
.nav-home { display: flex; align-items: center; letter-spacing: -.5px; }
.home { width: 23px; height: 20px; margin-bottom: 3px; }
.search { margin-left: auto; display: flex; align-items: center; gap: 20px; }
.search-in { width: 255px; height: 48px; border: 1px solid #ced4da; border-radius: 4px; padding: 2px 15px 0; font: inherit; letter-spacing: -.25px; background: #fff; }
.search-in::placeholder { color: #6c757d; opacity: 1; }
.acct { width: 114px; height: 54px; background: transparent; color: #fff; border: 1px solid #fff; border-radius: 4px; font: inherit; letter-spacing: -.2px; padding: 10px 0 0; }

/* yellow band */
.band { height: 308px; flex: none; background: #ffc107; padding: 30px 113px 0 112px; }
.detail { display: block; width: 92px; height: 53px; background: #0d6efd; color: #fff; border: 0; border-radius: 5px; font: inherit; padding: 8px 0 0; }
.grid { border-collapse: collapse; table-layout: fixed; width: 1620px; }
.c1 { width: 112px; } .c2 { width: 289px; } .c3 { width: 117px; } .c4 { width: 150px; }
.c5 { width: 208px; } .c6 { width: 202px; } .c7 { width: 251px; } .c8 { width: 291px; }
.grid th, .grid td { padding: 11px 10px 9px; text-align: left; font-weight: 400; height: 51px; }
.grid th { font-weight: 700; }
.grid thead th { height: 50px; border-bottom: 1.500px solid #222; padding: 13px 10px 7px; }
.grid tbody tr { border-bottom: 1px solid #e4e4e0; }
.grid tbody .r-thick { border-bottom-width: 2px; }
.grid tbody .r-thick th, .grid tbody .r-thick td { height: 52px; padding-top: 12px; padding-bottom: 8px; }
.grid .tight, .tight { letter-spacing: -.3px; }
.grid .date { letter-spacing: .45px; }

/* social */
.social { height: 90px; flex: none; background: #6351ce; color: #fff; display: flex; align-items: center; padding: 3px 0 0 31px; }
.soc-icons { margin-left: auto; display: flex; flex: none; width: 316px; margin-right: 26px; margin-top: -1px; }
.soc { width: 53.500px; height: 19px; flex: none; display: flex; align-items: flex-end; }
.soc-first { width: 48.500px; }
.soc svg { width: 19px; height: 19px; }
.soc .f { width: 12px; }
.dash::after { content: ""; width: 6px; height: 1.500px; background: #fff; }

/* footer */
.foot { flex: 1; background: #1c2331; color: #fff; display: grid; grid-template-columns: 482px 343px 344px 1fr; padding: 59px 0 0 146px; }
.f-h { margin: 0; font-size: 19px; font-weight: 700; line-height: 30px; }
.f-hs { letter-spacing: .45px; }
.f-rule { border: 0; width: 75px; height: 3px; background: #3c2f6b; margin: 5px 0 38px; }
.f-line { margin: 0 0 20px; display: flex; align-items: center; white-space: nowrap; }
.f-wide { letter-spacing: .17px; }
.f-narrow { white-space: normal; width: 250px; }
.f-line a { color: #fff; text-decoration: underline; }
.f-ic { width: 20px; height: 20px; margin-right: 6px; }
.f-home { width: 23px; margin-right: 5px; }

/* scrollbar */
.vscroll { width: 20px; flex: none; background: #f1f1f1; position: relative; display: flex; flex-direction: column; }
.sb-thumb { display: block; height: 728px; margin: 21px 0 0 1px; background: #a8a8a8; }
.sb-up, .sb-down { position: absolute; left: 5px; width: 0; height: 0; border-left: 5px solid transparent; border-right: 5px solid transparent; }
.sb-up { top: 8px; border-bottom: 7px solid #a8a8a8; }
.sb-down { bottom: 6px; border-top: 6px solid #505050; }

/* downloads */
.downloads { flex: 1; background: #fff; border-top: 2px solid #dee1e6; display: flex; padding-left: 5px; }
.dl { width: 291px; height: 100%; display: flex; align-items: center; position: relative; }
.dl:not(.dl-on)::after { content: ""; position: absolute; right: 0; top: 7px; bottom: 7px; width: 1px; background: #dedede; }
.dl-on { background: #e9e9e9; }
.dl-icon { width: 57px; flex: none; display: flex; justify-content: center; padding-left: 10px; }
.dl-icon svg { width: 20px; height: 24px; margin-left: -3px; }
.dl-ring { width: 32px; height: 32px; border-radius: 50%; border: 2.500px solid #5cb871; background: #e0f0e3; margin-left: -5px; }
.dl-body { flex: 1; min-width: 0; padding-bottom: 2px; }
.dl-name { font-size: 19px; line-height: 28px; color: #55585b; white-space: nowrap; letter-spacing: -.2px; }
.dl-sub { font-size: 12.500px; line-height: 27px; color: #2b2b2b; white-space: nowrap; }
.dl-chev { width: 13px; height: 9px; margin-right: 23px; }
.dl-end { margin-left: auto; display: flex; align-items: center; padding-right: 14px; }
.dl-all { font-size: 17px; color: #75787b; white-space: nowrap; }
.dl-x { width: 18px; height: 18px; margin-left: 32px; }

/* taskbar */
.taskbar { height: 50px; flex: none; background: linear-gradient(90deg, #1c1c1c, #2b2b2b 35%, #333 60%, #343434); display: flex; color: #fff; position: relative; }
.tk { height: 50px; display: flex; align-items: center; justify-content: center; position: relative; flex: none; }
.tk-sys { width: 60px; }
.tk-app { width: 61.800px; }
.tk-sys:nth-child(4) { margin-right: 4px; }
.lit::after { content: ""; position: absolute; left: 5px; right: 5px; bottom: 0; height: 3px; background: #76b9ed; }
.lit-on { background: #5a5a5a; }
.lit-on::after { left: 0; right: 0; }
.lit-split::after { right: 0; }
.t-win { width: 20px; height: 20px; }
.t-24 { width: 22px; height: 22px; }
.t-30 { width: 30px; height: 30px; }
.tray { margin-left: auto; display: flex; align-items: center; padding-right: 31px; font-size: 17px; }
.tr-weather { width: 26px; height: 24px; margin-right: 11px; }
.tr-temp { margin-right: 10px; }
.tr-cond { margin-right: 20px; white-space: nowrap; }
.tr-chev { width: 17px; height: 10px; margin-right: 10.500px; }
.tr-v { width: 20px; height: 20px; margin-right: 11.200px; }
.tr-sp { width: 20px; height: 20px; margin-right: 7.300px; }
.tr-bat { width: 20px; height: 13px; margin-right: 14.500px; }
.tr-mic { width: 14px; height: 21px; margin-right: 15.500px; }
.tr-wifi { width: 16px; height: 16px; margin-right: 13px; }
.tr-cloud { width: 20px; height: 13px; margin-right: 14px; }
.tr-eng { font-size: 14px; margin-right: 16.500px; }
.tr-clock { display: flex; flex-direction: column; align-items: center; font-size: 14.300px; line-height: 22px; margin-right: 22.500px; white-space: nowrap; }
.tr-note { width: 20px; height: 22px; }
```
